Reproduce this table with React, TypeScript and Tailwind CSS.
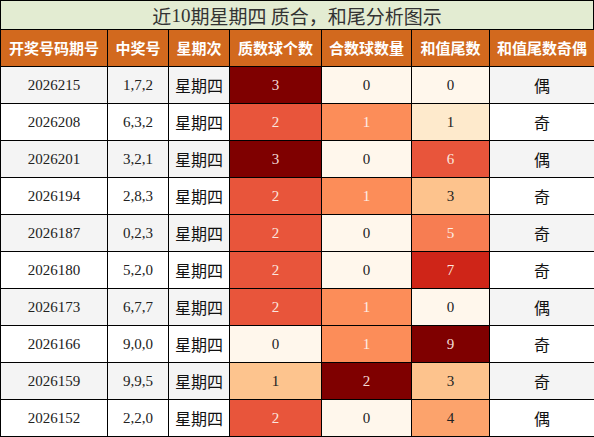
import React from 'react';

type Row = {
  issue: string;
  nums: string;
  day: string;
  prime: number;
  composite: number;
  tail: number;
  parity: string;
};

const rows: Row[] = [
  { issue: '2026215', nums: '1,7,2', day: '星期四', prime: 3, composite: 0, tail: 0, parity: '偶' },
  { issue: '2026208', nums: '6,3,2', day: '星期四', prime: 2, composite: 1, tail: 1, parity: '奇' },
  { issue: '2026201', nums: '3,2,1', day: '星期四', prime: 3, composite: 0, tail: 6, parity: '偶' },
  { issue: '2026194', nums: '2,8,3', day: '星期四', prime: 2, composite: 1, tail: 3, parity: '奇' },
  { issue: '2026187', nums: '0,2,3', day: '星期四', prime: 2, composite: 0, tail: 5, parity: '奇' },
  { issue: '2026180', nums: '5,2,0', day: '星期四', prime: 2, composite: 0, tail: 7, parity: '奇' },
  { issue: '2026173', nums: '6,7,7', day: '星期四', prime: 2, composite: 1, tail: 0, parity: '偶' },
  { issue: '2026166', nums: '9,0,0', day: '星期四', prime: 0, composite: 1, tail: 9, parity: '奇' },
  { issue: '2026159', nums: '9,9,5', day: '星期四', prime: 1, composite: 2, tail: 3, parity: '奇' },
  { issue: '2026152', nums: '2,2,0', day: '星期四', prime: 2, composite: 0, tail: 4, parity: '偶' },
];

const headers = ['开奖号码期号', '中奖号', '星期次', '质数球个数', '合数球数量', '和值尾数', '和值尾数奇偶'];

// heat colours per column (OrRd scale)
const primeCls: Record<number, string> = {
  0: 'bg-[#fff7ec] text-[#222]',
  1: 'bg-[#fdc48e] text-[#222]',
  2: 'bg-[#e8553b] text-[#fbe6df]',
  3: 'bg-[#7f0000] text-[#f3dcd6]',
};
const compCls: Record<number, string> = {
  0: 'bg-[#fff7ec] text-[#222]',
  1: 'bg-[#fc8d59] text-[#fdeee6]',
  2: 'bg-[#7f0000] text-[#f3dcd6]',
};
const tailCls: Record<number, string> = {
  0: 'bg-[#fff7ec] text-[#222]',
  1: 'bg-[#feeacc] text-[#222]',
  3: 'bg-[#fdc38d] text-[#222]',
  4: 'bg-[#fca36c] text-[#222]',
  5: 'bg-[#f77d52] text-[#fdeee6]',
  6: 'bg-[#e8553b] text-[#fbe6df]',
  7: 'bg-[#cf2518] text-[#fbe6df]',
  9: 'bg-[#7f0000] text-[#f3dcd6]',
};

const cell = 'flex items-center justify-center border-r border-b border-black h-[37px]';
const serif = "font-['Liberation_Serif','Noto_Sans_CJK_SC',serif] text-[15px]";
const cjk = "font-['Noto_Sans_CJK_SC',sans-serif] text-[15px]";

export default function App() {
  return (
    <div className="w-[594px] h-[437px] bg-white">
      <div className="border-l border-t border-black">
        <div className="h-[29px] border-r border-b border-black bg-[#e3ecd2] flex items-center justify-center text-[19px] text-[#333] font-['Liberation_Serif','Noto_Sans_CJK_SC',serif] leading-none">
          <span className="font-['Noto_Sans_CJK_SC',sans-serif]">近</span>
          <span>10</span>
          <span className="font-['Noto_Sans_CJK_SC',sans-serif]">期星期四 质合，和尾分析图示</span>
        </div>
        <div className="grid grid-cols-[107px_61px_61px_92px_90px_78px_105px]">
          {headers.map((h) => (
            <div
              key={h}
              className={`${cell} bg-[#d2691e] text-white font-bold ${cjk}`}
            >
              {h}
            </div>
          ))}
          {rows.map((r, i) => {
            const zebra = i % 2 === 0 ? 'bg-[#f4f4f4]' : 'bg-white';
            return (
              <React.Fragment key={r.issue}>
                <div className={`${cell} ${zebra} ${serif} text-[#222]`}>{r.issue}</div>
                <div className={`${cell} ${zebra} ${serif} text-[#222]`}>{r.nums}</div>
                <div className={`${cell} ${zebra} ${cjk} text-[16px] text-[#111]`}>{r.day}</div>
                <div className={`${cell} ${primeCls[r.prime]} ${serif}`}>{r.prime}</div>
                <div className={`${cell} ${compCls[r.composite]} ${serif}`}>{r.composite}</div>
                <div className={`${cell} ${tailCls[r.tail]} ${serif}`}>{r.tail}</div>
                <div className={`${cell} ${zebra} ${cjk} text-[16px] text-[#111]`}>{r.parity}</div>
              </React.Fragment>
            );
          })}
        </div>
      </div>
    </div>
  );
}
